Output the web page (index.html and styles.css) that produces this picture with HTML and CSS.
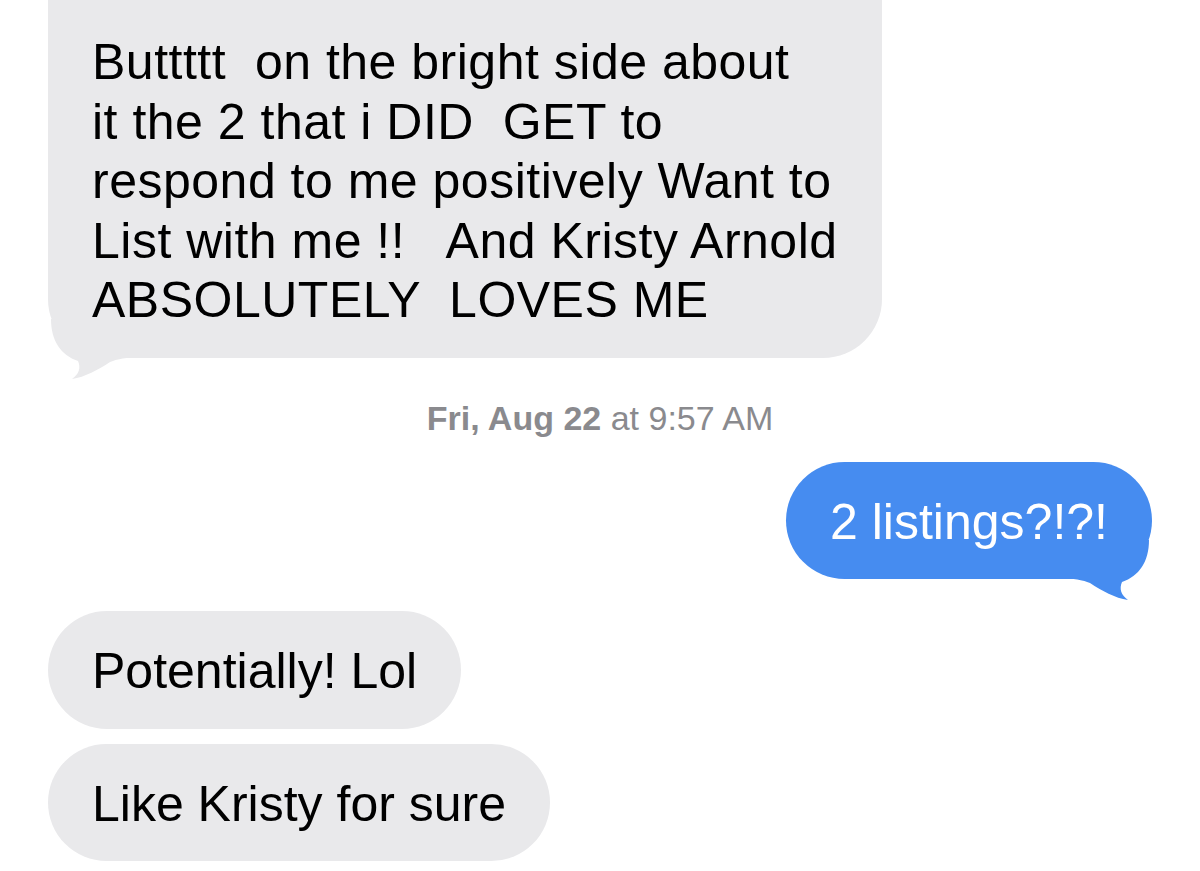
FILE: index.html
```html
<!DOCTYPE html>
<html lang="en">
<head>
  <meta charset="UTF-8">
  <title>Messages</title>
  <link rel="stylesheet" href="styles.css">
</head>
<body>
  <div class="thread">
    <div class="msg received first">
      <span class="msg-text">Buttttt  on the bright side about<br>it the 2 that i DID  GET to<br>respond to me positively Want to<br>List with me !!   And Kristy Arnold<br>ABSOLUTELY  LOVES ME</span>
      <svg class="tail" width="80" height="60" viewBox="0 0 80 60"><path d="M3 0 C3 22 13 36 30 42 C33 49 31 55 24 60 C37 58 50 51 62 43 C70 40 76 39 80 39 L80 0 Z" fill="currentColor"/></svg>
    </div>

    <div class="timestamp"><span class="day">Fri, Aug 22</span> at 9:57 AM</div>

    <div class="msg sent">
      <span class="msg-text">2 listings?!?!</span>
      <svg class="tail" width="80" height="60" viewBox="0 0 80 60"><path d="M3 0 C3 22 13 36 30 42 C33 49 31 55 24 60 C37 58 50 51 62 43 C70 40 76 39 80 39 L80 0 Z" fill="currentColor"/></svg>
    </div>

    <div class="msg received gap-big">
      <span class="msg-text">Potentially! Lol</span>
    </div>

    <div class="msg received gap-small">
      <span class="msg-text">Like Kristy for sure</span>
    </div>
  </div>
</body>
</html>
```

FILE: styles.css
```css
body {
  margin: 0;
  background: #fff;
  font-family: "Liberation Sans", Arial, sans-serif;
  overflow: hidden;
}
.thread {
  display: flex;
  flex-direction: column;
  padding: 0 48px;
}
.msg {
  position: relative;
  padding: 31px 44px 27px;
  border-radius: 59px;
  font-size: 50px;
  line-height: 59.5px;
}
.msg.received {
  align-self: flex-start;
  background: #e9e9eb;
  color: #000;
}
.msg.received .tail {
  color: #e9e9eb;
}
.msg.sent {
  align-self: flex-end;
  background: #468cf0;
  color: #fff;
  margin-top: 24px;
}
.msg.sent .tail {
  color: #468cf0;
  left: auto;
  right: 0;
  transform: scaleX(-1);
}
.msg.first {
  margin-top: -60px;
  padding-top: 93px;
  letter-spacing: 0.5px;
}
.msg.gap-big {
  margin-top: 32px;
}
.msg.gap-small {
  margin-top: 15px;
}
.msg-text {
  position: relative;
  z-index: 1;
  white-space: pre-wrap;
}
.tail {
  position: absolute;
  left: 0;
  bottom: -21px;
}
.timestamp {
  align-self: center;
  margin-top: 40px;
  font-size: 34px;
  line-height: 40px;
  color: #8a8a8e;
}
.timestamp .day {
  font-weight: 600;
}
```
